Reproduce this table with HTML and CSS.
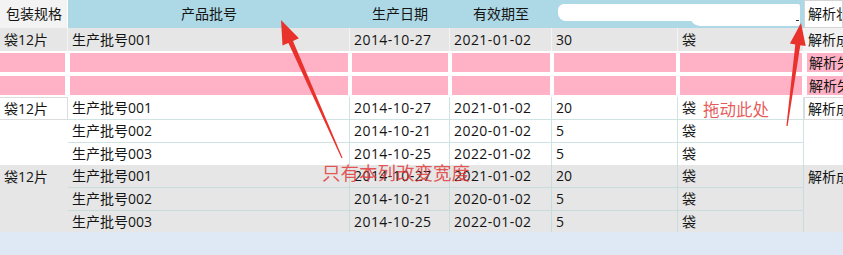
FILE: index.html
```html
<!DOCTYPE html>
<html lang="zh">
<head>
<meta charset="utf-8">
<link rel="stylesheet" href="styles.css">
</head>
<body>
<div class="page">
  <div class="table">
    <div class="row head">
      <div class="c1 hc1">包装规格</div>
      <div class="inner hinner">
        <div class="hc">产品批号</div>
        <div class="hc">生产日期</div>
        <div class="hc">有效期至</div>
        <div class="hc"></div>
        <div class="hc"></div>
      </div>
      <div class="cr hcr">解析状态</div>
    </div>

    <div class="row r1">
      <div class="c1">袋12片</div>
      <div class="inner cols">
        <div class="cell">生产批号001</div>
        <div class="cell date">2014-10-27</div>
        <div class="cell date">2021-01-02</div>
        <div class="cell">30</div>
        <div class="cell">袋</div>
      </div>
      <div class="cr">解析成功</div>
    </div>

    <div class="row pink">
      <div class="c1 pk"></div>
      <div class="inner cols">
        <div class="cell pk"></div>
        <div class="cell pk"></div>
        <div class="cell pk"></div>
        <div class="cell pk"></div>
        <div class="cell pk"></div>
      </div>
      <div class="cr pk">解析失败</div>
    </div>

    <div class="row pink">
      <div class="c1 pk"></div>
      <div class="inner cols">
        <div class="cell pk"></div>
        <div class="cell pk"></div>
        <div class="cell pk"></div>
        <div class="cell pk"></div>
        <div class="cell pk"></div>
      </div>
      <div class="cr pk">解析失败</div>
    </div>

    <div class="row group white">
      <div class="c1"><div class="gbox">袋12片</div></div>
      <div class="inner">
        <div class="cols sub">
          <div class="cell">生产批号001</div>
          <div class="cell date">2014-10-27</div>
          <div class="cell date">2021-01-02</div>
          <div class="cell">20</div>
          <div class="cell">袋</div>
        </div>
        <div class="cols sub">
          <div class="cell">生产批号002</div>
          <div class="cell date">2014-10-21</div>
          <div class="cell date">2020-01-02</div>
          <div class="cell">5</div>
          <div class="cell">袋</div>
        </div>
        <div class="cols sub last">
          <div class="cell">生产批号003</div>
          <div class="cell date">2014-10-25</div>
          <div class="cell date">2022-01-02</div>
          <div class="cell">5</div>
          <div class="cell">袋</div>
        </div>
      </div>
      <div class="cr"><div class="gbox rbox">解析成功</div></div>
    </div>

    <div class="row group grey">
      <div class="c1"><div class="gtext">袋12片</div></div>
      <div class="inner">
        <div class="cols sub">
          <div class="cell">生产批号001</div>
          <div class="cell date">2014-10-27</div>
          <div class="cell date">2021-01-02</div>
          <div class="cell">20</div>
          <div class="cell">袋</div>
        </div>
        <div class="cols sub">
          <div class="cell">生产批号002</div>
          <div class="cell date">2014-10-21</div>
          <div class="cell date">2020-01-02</div>
          <div class="cell">5</div>
          <div class="cell">袋</div>
        </div>
        <div class="cols sub last">
          <div class="cell">生产批号003</div>
          <div class="cell date">2014-10-25</div>
          <div class="cell date">2022-01-02</div>
          <div class="cell">5</div>
          <div class="cell">袋</div>
        </div>
      </div>
      <div class="cr"><div class="gtext">解析成功</div></div>
    </div>
  </div>

  <div class="smear smear-a"></div>
  <div class="smear smear-b"></div>
  <div class="dash"></div>

  <svg class="arrows" width="843" height="255" viewBox="0 0 843 255">
    <polygon points="281,20 298.9,38.3 293,40.9 342.5,157.8 341.5,158.2 288.4,42.9 282.5,45.5" fill="#e8322b"/>
    <polygon points="801,23 805.7,46 800.3,45.2 787.6,126.1 786.4,125.9 795.3,44.4 789.9,43.6" fill="#e8322b"/>
  </svg>
  <span class="note note-a">只有本列改变宽度</span>
  <span class="note note-b">拖动此处</span>
</div>
</body>
</html>
```

FILE: styles.css
```css
* { box-sizing: border-box; }
html, body { margin: 0; padding: 0; }
body {
  background: #dfe9f5;
  font-family: "Open Sans", "Noto Sans CJK SC", sans-serif;
  font-size: 14px;
  color: #141414;
}
.page {
  position: relative;
  width: 843px;
  height: 255px;
  overflow: hidden;
}
.table {
  background: #ffffff;
  width: 843px;
}
.row {
  display: flex;
  height: 23px;
}
.c1 {
  width: 68px;
  flex: none;
  padding-left: 4px;
  line-height: 23px;
  white-space: nowrap;
  overflow: hidden;
}
.inner {
  width: 736px;
  flex: none;
}
.cr {
  flex: 1;
  min-width: 0;
  padding-left: 4px;
  line-height: 23px;
  white-space: nowrap;
  overflow: hidden;
}
.cols {
  display: grid;
  grid-template-columns: 282px 100px 102px 126px 126px;
  height: 100%;
}
.cell {
  padding-left: 4px;
  line-height: 23px;
  white-space: nowrap;
  overflow: hidden;
}
.date { letter-spacing: 0.45px; }

/* header */
.head { height: 28px; }
.hc1 {
  background: #f3f3f3;
  border-right: 1px solid #ffffff;
  line-height: 28px;
  padding-left: 6px;
}
.hinner {
  background: #add8e6;
  display: grid;
  grid-template-columns: 282px 100px 102px 126px 126px;
}
.hc {
  text-align: center;
  line-height: 28px;
}
.hcr {
  background: #ffffff;
  border: 1px solid #d4d4d4;
  line-height: 26px;
  padding-left: 3px;
}

/* first plain row */
.r1 { background: #e6e6e6; }
.r1 .cell { border-right: 1px solid #f4f4f4; }
.r1 .c1 { border-right: 1px solid #f4f4f4; }
.r1 .cr { background: #f2f2f2; }

/* pink rows */
.pk {
  background: #ffb1c6;
  background-clip: padding-box;
  border: 2px solid #ffffff;
}
.pink .c1.pk { border-left: 0; border-right-width: 3px; }
.pink .cr.pk { border-right: 0; border-left-width: 3px; padding-left: 2px; line-height: 19px; }

/* groups */
.group { height: 68px; }
.group .sub { height: 23px; }
.group .sub.last { height: 22px; }
.white .sub { border-bottom: 1px solid #cfe3e3; }
.white .sub.last { border-bottom: 0; }
.white .cell { border-right: 1px solid #cfe3e3; line-height: 22px; }
.gbox {
  height: 23px;
  line-height: 22px;
  border: 1px solid #dcdcdc;
  border-left: 0;
  margin-left: -4px;
  padding-left: 4px;
}
.rbox {
  border-left: 1px solid #dcdcdc;
  border-right: 0;
  margin-left: -4px;
  padding-left: 3px;
}

.grey { background: #e6e6e6; height: 67px; }
.grey .sub { border-bottom: 1px solid #c9dcdc; }
.grey .sub.last { border-bottom: 0; height: 21px; }
.grey .cell { border-right: 1px solid #c9dcdc; line-height: 22px; }
.gtext { line-height: 23px; }

/* redaction smear over header */
.smear {
  position: absolute;
  background: #ffffff;
}
.smear-a {
  left: 558px;
  top: 4px;
  width: 242px;
  height: 17px;
  border-radius: 6px 2px 2px 8px;
}
.smear-b {
  left: 690px;
  top: 12px;
  width: 110px;
  height: 14px;
  border-radius: 2px 2px 3px 10px;
}
.dash {
  position: absolute;
  left: 796px;
  top: 20px;
  width: 3px;
  height: 1px;
  background: #333;
}

/* annotations */
.arrows {
  position: absolute;
  left: 0;
  top: 0;
  pointer-events: none;
}
.note {
  position: absolute;
  font-family: "Noto Sans CJK SC", sans-serif;
  color: rgba(226, 52, 52, 0.82);
  white-space: nowrap;
  line-height: 1;
}
.note-a {
  left: 322px;
  top: 163px;
  font-size: 18.5px;
}
.note-b {
  left: 703px;
  top: 101px;
  font-size: 16.5px;
}
```
